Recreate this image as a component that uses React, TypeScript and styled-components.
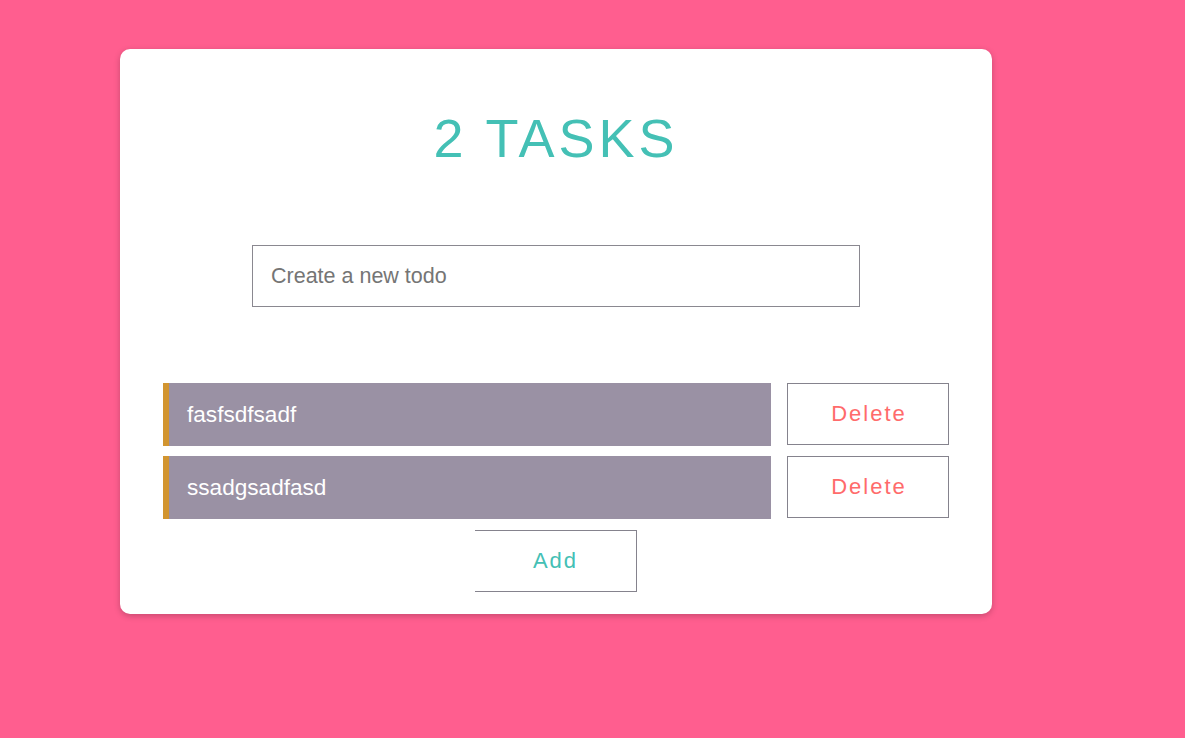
import React from "react";
import styled, { createGlobalStyle } from "styled-components";

const Global = createGlobalStyle`
  html, body { margin: 0; padding: 0; }
  body {
    background: #ff5e8f;
    font-family: "Liberation Sans", Arial, sans-serif;
    min-height: 738px;
  }
  * { box-sizing: border-box; }
`;

const Page = styled.div`
  padding: 49px 0 0 120px;
`;

const Card = styled.div`
  width: 872px;
  background: #ffffff;
  border-radius: 10px;
  box-shadow: 0 2px 6px rgba(0, 0, 0, 0.22);
  padding: 57px 43px 22px;
  display: flex;
  flex-direction: column;
  align-items: center;
`;

const Title = styled.h1`
  margin: 0;
  font-size: 54px;
  line-height: 64px;
  font-weight: 400;
  letter-spacing: 4px;
  color: #44c0b5;
`;

const Input = styled.input`
  margin-top: 75px;
  width: 608px;
  height: 62px;
  border: 1px solid #8a8890;
  padding: 0 18px;
  font-family: "Liberation Sans", Arial, sans-serif;
  font-size: 21.5px;
  color: #333;
  outline: none;
  &::placeholder { color: #757575; }
`;

const List = styled.div`
  margin-top: 76px;
  width: 100%;
  display: flex;
  flex-direction: column;
  gap: 10px;
`;

const Row = styled.div`
  display: flex;
  gap: 16px;
  align-items: flex-start;
`;

const Item = styled.div`
  width: 608px;
  height: 63px;
  background: #9a91a4;
  border-left: 6px solid #d29530;
  padding-left: 18px;
  display: flex;
  align-items: center;
  color: #ffffff;
  font-size: 22.6px;
`;

const Button = styled.button<{ $color: string; $noLeft?: boolean }>`
  width: 162px;
  height: 62px;
  background: #ffffff;
  border: 1px solid #85838d;
  ${(p) => (p.$noLeft ? "border-left: none;" : "")}
  color: ${(p) => p.$color};
  font-family: "Liberation Sans", Arial, sans-serif;
  font-size: 22px;
  letter-spacing: 2px;
  padding: 0 0 0 2px;
  cursor: pointer;
`;

const AddButton = styled(Button)`
  margin-top: 11px;
  padding: 0;
`;

const todos = ["fasfsdfsadf", "ssadgsadfasd"];

export default function App() {
  return (
    <>
      <Global />
      <Page>
        <Card>
          <Title>{todos.length} TASKS</Title>
          <Input placeholder="Create a new todo" />
          <List>
            {todos.map((t) => (
              <Row key={t}>
                <Item>{t}</Item>
                <Button $color="#ff6b6b">Delete</Button>
              </Row>
            ))}
          </List>
          <AddButton $color="#44c0b5" $noLeft>
            Add
          </AddButton>
        </Card>
      </Page>
    </>
  );
}
